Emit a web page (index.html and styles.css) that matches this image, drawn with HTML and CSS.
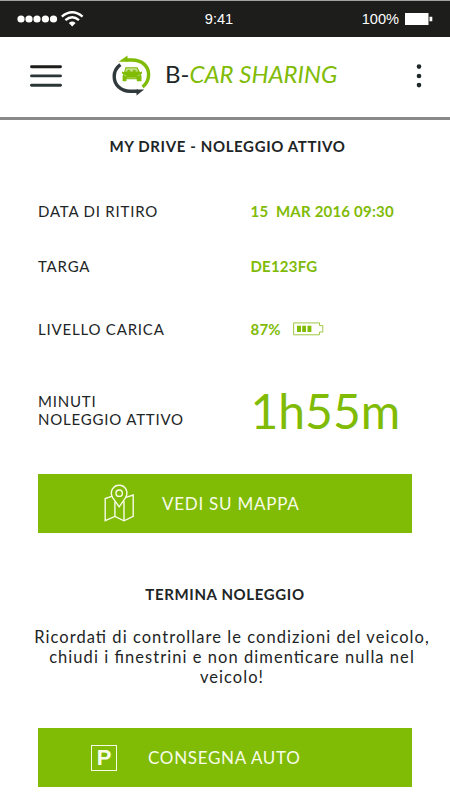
FILE: index.html
```html
<!DOCTYPE html>
<html lang="it">

<head>
  <meta charset="UTF-8">
  <title>B-Car Sharing</title>
  <link rel="stylesheet" href="styles.css">
</head>

<body>
  <div class="status">
    <div class="signal">
      <svg width="68" height="18" viewBox="0 0 68 18">
        <g fill="#fff">
          <circle cx="4" cy="9" r="3.6" />
          <circle cx="12" cy="9" r="3.6" />
          <circle cx="20" cy="9" r="3.6" />
          <circle cx="28.4" cy="9" r="3.6" />
          <circle cx="36.5" cy="9" r="3.6" />
          <path d="M51.8 13 Q55.2 10.2 58.6 13 L55.2 16.4Z" />
        </g>
        <g fill="none" stroke="#fff" stroke-width="2.4">
          <path d="M44.8 6.6 Q55.2 -2 65.6 6.6" />
          <path d="M48.4 10.2 Q55.2 4.4 62 10.2" />
        </g>
      </svg>
    </div>
    <span class="time">9:41</span>
    <div class="power">
      <span>100%</span>
      <svg width="28" height="12" viewBox="0 0 28 12">
        <path fill="#fff" d="M0 0H23.5V12H0Z M24.5 3.7H27.3V8.3H24.5Z" />
      </svg>
    </div>
  </div>

  <header>
    <svg class="menu" width="32" height="24" viewBox="0 0 32 24">
      <g stroke="#2b3536" stroke-width="2.9" stroke-linecap="round">
        <path d="M1.5 2.7H30.5" stroke="#1d1d1b" />
        <path d="M1.5 11.9H30.5" />
        <path d="M1.5 21.2H30.5" />
      </g>
    </svg>
    <div class="brand">
      <svg width="40" height="42" viewBox="0 0 40 42">
        <path fill="none" stroke="#80bb06" stroke-width="3.4" d="M14 5H20C30 5 36.6 11.2 36.6 19.5C36.6 24.5 34.3 29 30.6 32" />
        <path fill="#80bb06" d="M6.6 6.7L15.5 0.6V6.7Z" />
        <path fill="none" stroke="#30393b" stroke-width="3.4" d="M8.4 9.7C5 12.2 2.2 16.6 2.2 21.5C2.2 30 9 36.3 18 36.3H26" />
        <path fill="#30393b" d="M32.2 34.6H24.5V40.4Z" />
        <!-- auto -->
        <path fill="#80bb06" d="M13.5 12.2H25.5L28 17.3L30 16.4V18.4L28.9 19.2L29.5 21V26.2H24.8V24.2H14.4V26.2H10.6V21L11.3 19.2L10 18.4V16.4L12 17.3Z" />
        <path fill="#fff" opacity=".55" d="M14.4 13.2H24.7L26.2 16.4H13Z" />
        <path fill="#80bb06" d="M15 16.8L15.8 14.8H17.6L18.5 16.8ZM20.5 16.8L21.4 14.8H23.2L24 16.8Z" />
        <path stroke="#fff" stroke-width=".6" opacity=".6" d="M11.8 20L14.4 20.8M28.1 20L25.4 20.8M15 22.9H24.4" />
      </svg>
      <h1>B-<em>CAR SHARING</em></h1>
    </div>
    <svg class="more" width="6" height="24" viewBox="0 0 6 24">
      <g fill="#1f2829">
        <circle cx="3" cy="2.6" r="2.3" />
        <circle cx="3" cy="12" r="2.3" />
        <circle cx="3" cy="21.1" r="2.3" />
      </g>
    </svg>
  </header>

  <main>
    <h2 class="title">MY DRIVE - NOLEGGIO ATTIVO</h2>
    <dl>
      <dt>DATA DI RITIRO</dt>
      <dd class="date">15&nbsp; MAR 2016 09:30</dd>
      <dt>TARGA</dt>
      <dd class="plate">DE123FG</dd>
      <dt class="charge">LIVELLO CARICA</dt>
      <dd class="level">87%
        <svg width="31" height="14" viewBox="0 0 31 14">
          <path fill="none" stroke="#9fc945" d="M.6 .9H26.5V3.6H29.8V10H26.5V12.8H.6Z" />
          <path fill="#80bb06" d="M4 3.8H8V10H4ZM9.2 3.8H13V10H9.2ZM14.5 3.8H18.4V10H14.5Z" />
        </svg>
      </dd>
      <dt class="minutes">MINUTI<br>NOLEGGIO ATTIVO</dt>
      <dd class="elapsed">1h55m</dd>
    </dl>

    <a class="btn map" href="#">
      <svg width="31" height="38" viewBox="0 0 31 38">
        <g fill="none" stroke="#f7fce8" stroke-width="1.4">
          <path d="M8.2 12.2L1.2 14.6V36.6L10.9 32.4L20 36.8L29.2 32.4V11L22 13.4" />
          <path d="M10.9 32.4V17.4M20 36.8V17" />
          <path d="M15.2 22.8L8.6 13.6C5.2 7.6 9.2 1.2 15.2 1.2S25 7.6 21.6 13.6Z" />
          <circle cx="15.2" cy="9.2" r="3.2" />
        </g>
      </svg>
      <span>VEDI SU MAPPA</span>
    </a>

    <h2 class="end">TERMINA NOLEGGIO</h2>
    <p>Ricordati di controllare le condizioni del veicolo,<br>chiudi i finestrini e non dimenticare nulla nel<br>veicolo!</p>

    <a class="btn park" href="#">
      <span class="sign">P</span>
      <span>CONSEGNA AUTO</span>
    </a>
  </main>
</body>

</html>
```
FILE: styles.css
```css
* {
  box-sizing: border-box;
}

body {
  margin: 0;
  height: 800px;
  overflow: hidden;
  background-color: #fff;
  color: #1d2526;
  font-family: Lato, sans-serif;
}

.status {
  display: grid;
  grid-template-columns: 1fr auto 1fr;
  align-items: center;
  height: 37px;
  padding: 0 17px;
  border-top: 1px solid #a0a4a0;
  background-color: #1d1d1b;
  color: #fff;
  font: 14.6px/18px "Liberation Sans", sans-serif;
}

.signal {
  height: 18px;
}

.time {
  padding-right: 12px;
}

.power {
  display: flex;
  justify-content: flex-end;
  align-items: center;
  gap: 6px;
}

header {
  display: flex;
  align-items: center;
  height: 83px;
  padding: 0 28px 3px 30px;
  border-bottom: 3px solid #8a8a8a;
}

.brand {
  display: flex;
  align-items: center;
  gap: 13px;
  margin-left: 50px;
}

h1 {
  margin: 0 0 3px;
  font-size: 24px;
  line-height: 30px;
  font-weight: 400;
}

h1 em {
  color: #80bb06;
}

.more {
  margin-left: auto;
}

main {
  padding: 16px 38px 0;
}

h2 {
  margin: 0;
  font-size: 15px;
  line-height: 20px;
  font-weight: 700;
  letter-spacing: .63px;
  text-align: center;
}

.title {
  padding-left: 5px;
}

dl {
  display: grid;
  grid-template-columns: 212.5px 1fr;
  grid-template-rows: 55px 55px 72px 90px;
  align-items: center;
  margin: 27px 0 0;
}

dt {
  font-size: 15px;
  line-height: 18px;
  letter-spacing: .8px;
}

dd {
  display: flex;
  align-items: center;
  margin: 0;
  color: #80bb06;
  font-size: 15px;
  font-weight: 700;
  letter-spacing: .2px;
  white-space: nowrap;
}

.level svg {
  margin-left: 12px;
}

.elapsed {
  font-size: 48px;
  font-weight: 400;
  letter-spacing: 0;
}

.btn {
  display: flex;
  align-items: center;
  height: 59px;
  background-color: #80bb06;
  color: #f7fce8;
  font-size: 17px;
  letter-spacing: .75px;
  text-decoration: none;
}

.map {
  gap: 27px;
  margin-top: 19px;
  padding-left: 66px;
}

.map svg {
  margin-bottom: 2px;
}

.end {
  margin-top: 51px;
}

p {
  margin: 23px -31px 41px -17px;
  font-size: 16.5px;
  line-height: 20px;
  letter-spacing: 1.05px;
  text-align: center;
  white-space: nowrap;
  font-feature-settings: "liga" 1;
}

.park {
  gap: 31px;
  padding-left: 53px;
  letter-spacing: .7px;
}

.sign {
  width: 26px;
  height: 26px;
  border: 1.5px solid #f7fce8;
  font: bold 22px/24px "Liberation Sans", sans-serif;
  letter-spacing: 0;
  text-align: center;
}
```
